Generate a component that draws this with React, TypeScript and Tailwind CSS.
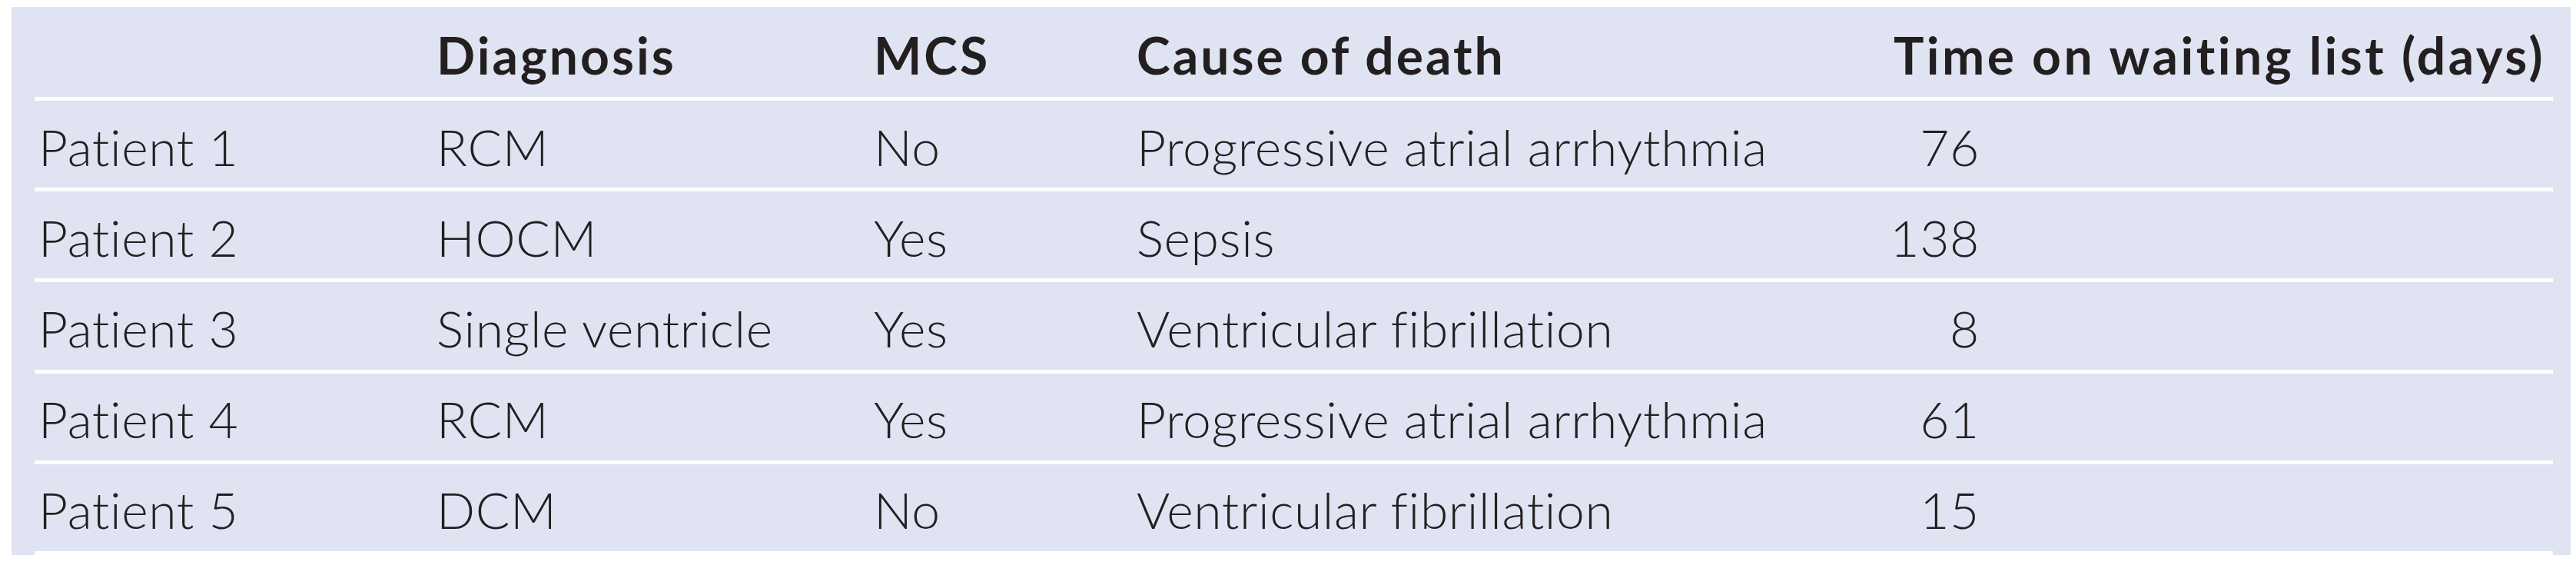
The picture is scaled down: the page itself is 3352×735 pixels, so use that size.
import React from 'react';

interface Row {
    patient: string;
    diagnosis: string;
    mcs: string;
    cause: string;
    days: number;
}

const rows: Row[] = [
    { patient: 'Patient 1', diagnosis: 'RCM', mcs: 'No', cause: 'Progressive atrial arrhythmia', days: 76 },
    { patient: 'Patient 2', diagnosis: 'HOCM', mcs: 'Yes', cause: 'Sepsis', days: 138 },
    { patient: 'Patient 3', diagnosis: 'Single ventricle', mcs: 'Yes', cause: 'Ventricular fibrillation', days: 8 },
    { patient: 'Patient 4', diagnosis: 'RCM', mcs: 'Yes', cause: 'Progressive atrial arrhythmia', days: 61 },
    { patient: 'Patient 5', diagnosis: 'DCM', mcs: 'No', cause: 'Ventricular fibrillation', days: 15 },
];

const grid = 'grid grid-cols-[518px_569px_342px_979px_1fr] items-center pl-[5px]';

export default function App() {
    return (
        <div className="min-h-screen bg-white pt-[9px] pl-[15px]">
            <div
                className="w-[3330px] bg-[#e0e4f2] pl-[30px] pr-[23px] text-[#231f20] text-[66px] leading-none [font-variant-ligatures:none]"
                style={{ fontFamily: 'Lato, "Liberation Sans", sans-serif' }}
            >
                {/* Header */}
                <div className={`${grid} h-[117px] pt-[8px] font-bold tracking-[3px]`}>
                    <div />
                    <div>Diagnosis</div>
                    <div>MCS</div>
                    <div>Cause of death</div>
                    <div className="pl-[6px] tracking-[3.5px]">Time on waiting list (days)</div>
                </div>

                {/* Body */}
                {rows.map((row) => (
                    <div
                        key={row.patient}
                        className={`${grid} h-[118.2px] border-t-[5px] border-white pt-[6px] font-light tracking-[0.6px]`}
                    >
                        <div>{row.patient}</div>
                        <div>{row.diagnosis}</div>
                        <div>{row.mcs}</div>
                        <div>{row.cause}</div>
                        <div className="w-[118px] text-right">{row.days}</div>
                    </div>
                ))}
                <div className="h-[5px] bg-white" />
            </div>
        </div>
    );
}
